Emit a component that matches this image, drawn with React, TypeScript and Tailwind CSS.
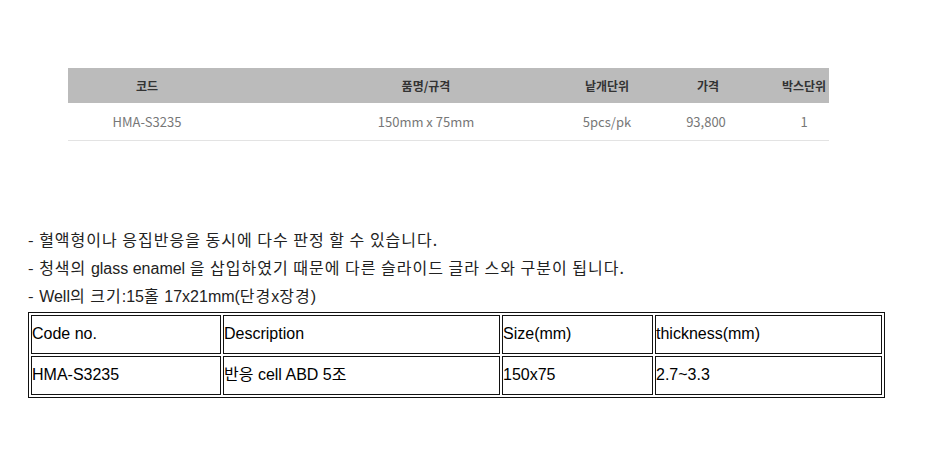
import React from "react";

const KR = { fontFamily: '"Noto Sans CJK KR", "Noto Sans", sans-serif' };
const AR = { fontFamily: '"Liberation Sans", "Noto Sans CJK KR", Arial, sans-serif' };
const LAT = { fontFamily: '"Liberation Sans Narrow", "Liberation Sans", Arial, sans-serif' };

const COLS = "grid grid-cols-[158px_344px_74px_124px_72px]";

const SPEC = [
  { code: "HMA-S3235", desc: "150mm x 75mm", unit: "5pcs/pk", price: "93,800", box: "1" },
];

const DETAIL_HEAD = ["Code no.", "Description", "Size(mm)", "thickness(mm)"];
const DETAIL_ROW = ["HMA-S3235", "반응 cell ABD 5조", "150x75", "2.7~3.3"];
const DETAIL_W = ["w-[190px]", "w-[277px]", "w-[151px]", "w-[227px]"];

// latin runs inside the notes are set narrower than the hangul
function L({ children }: { children: React.ReactNode }) {
  return (
    <span className="tracking-normal" style={LAT}>
      {children}
    </span>
  );
}

export default function App() {
  return (
    <div className="w-[943px] h-[453px] bg-white overflow-hidden">
      {/* Spec table */}
      <div className="ml-[68px] mt-[68px] w-[761px] overflow-hidden" style={KR}>
        <div className={`${COLS} h-[35px] items-center bg-[#bbbbbb] text-[12px] font-bold text-[#333] whitespace-nowrap`}>
          <div className="text-center">코드</div>
          <div className="text-center pl-[56px]">품명/규격</div>
          <div className="text-center">낱개단위</div>
          <div className="text-center pl-[4px]">가격</div>
          <div className="text-center">박스단위</div>
        </div>
        {SPEC.map((r) => (
          <div
            key={r.code}
            className={`${COLS} h-[38px] items-center border-b border-[#e3e3e3] text-[13px] text-[#777] whitespace-nowrap`}
          >
            <div className="text-center">{r.code}</div>
            <div className="text-center pl-[56px]">{r.desc}</div>
            <div className="text-center">{r.unit}</div>
            <div className="text-center">{r.price}</div>
            <div className="text-center">{r.box}</div>
          </div>
        ))}
      </div>

      {/* Notes + detail table */}
      <div className="pl-[28px] mt-[84px] text-[#222]">
        <div className="text-[16px] tracking-[1px] whitespace-nowrap" style={KR}>
          <p className="h-[28.5px] flex items-center">- 혈액형이나 응집반응을 동시에 다수 판정 할 수 있습니다.</p>
          <p className="h-[28.5px] flex items-center">
            <span>
              - 청색의 <L>glass enamel</L> 을 삽입하였기 때문에 다른 슬라이드 글라 스와 구분이 됩니다.
            </span>
          </p>
          <p className="h-[28.5px] flex items-center">
            <span>
              - <L>Well</L>의 크기<L>:15</L>홀 <L>17x21mm(</L>단경<L>x</L>장경<L>)</L>
            </span>
          </p>
        </div>

        <table
          className="mt-[1px] table-fixed border-separate border-spacing-[2px] border border-[#111] text-[16px] text-black"
          style={AR}
        >
          <tbody>
            {[DETAIL_HEAD, DETAIL_ROW].map((row, i) => (
              <tr key={i}>
                {row.map((cell, j) => (
                  <td
                    key={j}
                    className={`${DETAIL_W[j]} h-[39px] border border-[#111] px-0 align-middle whitespace-nowrap`}
                  >
                    {cell}
                  </td>
                ))}
              </tr>
            ))}
          </tbody>
        </table>
      </div>
    </div>
  );
}
